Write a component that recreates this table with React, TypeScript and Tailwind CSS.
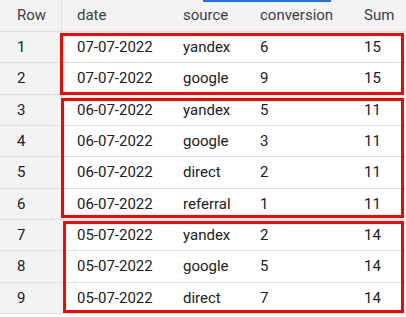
import React from "react";

const rows = [
  { n: 1, date: "07-07-2022", source: "yandex", conv: 6, sum: 15 },
  { n: 2, date: "07-07-2022", source: "google", conv: 9, sum: 15 },
  { n: 3, date: "06-07-2022", source: "yandex", conv: 5, sum: 11 },
  { n: 4, date: "06-07-2022", source: "google", conv: 3, sum: 11 },
  { n: 5, date: "06-07-2022", source: "direct", conv: 2, sum: 11 },
  { n: 6, date: "06-07-2022", source: "referral", conv: 1, sum: 11 },
  { n: 7, date: "05-07-2022", source: "yandex", conv: 2, sum: 14 },
  { n: 8, date: "05-07-2022", source: "google", conv: 5, sum: 14 },
  { n: 9, date: "05-07-2022", source: "direct", conv: 7, sum: 14 },
];

const cols = "grid grid-cols-[62px_106px_77px_104px_1fr]";

export default function App() {
  return (
    <div
      className="relative h-[317px] w-[406px] overflow-hidden bg-white text-[15px] text-[#202124]"
      style={{ fontFamily: "Roboto, 'Liberation Sans', sans-serif" }}
    >
      {/* header */}
      <div className={clsxJoin(cols, "h-[32px] items-center border-b border-[#e0e0e0] bg-[#f3f3f3] text-[#3c4043]")}>
        <div className="flex h-full items-center border-r border-[#e0e0e0] pl-[17px]">Row</div>
        <div className="pl-[15px]">date</div>
        <div className="pl-[15px]">source</div>
        <div className="pl-[15px]">conversion</div>
        <div className="pl-[15px]">Sum</div>
      </div>

      {rows.map((r) => (
        <div
          key={r.n}
          className={clsxJoin(cols, "h-[31.33px] items-center border-b border-[#e0e0e0]")}
        >
          <div className="flex h-full items-center border-r border-[#e0e0e0] bg-[#f3f3f3] pl-[17px]">
            {r.n}
          </div>
          <div className="pl-[15px]">{r.date}</div>
          <div className="pl-[15px]">{r.source}</div>
          <div className="pl-[15px]">{r.conv}</div>
          <div className="pl-[15px]">{r.sum}</div>
        </div>
      ))}

      {/* blue accent at top */}
      <div className="absolute left-[203px] top-0 h-[2px] w-[128px] bg-[#1a73e8]" />

      {/* red highlight boxes */}
      <div className="absolute left-[60px] top-[33px] h-[62px] w-[344px] border-[3px] border-[#ff0000]" />
      <div className="absolute left-[61px] top-[98px] h-[120px] w-[343px] border-[3px] border-[#ff0000]" />
      <div className="absolute left-[63px] top-[221px] h-[92px] w-[341px] border-[3px] border-[#ff0000]" />
    </div>
  );
}

function clsxJoin(...c: string[]) {
  return c.join(" ");
}
